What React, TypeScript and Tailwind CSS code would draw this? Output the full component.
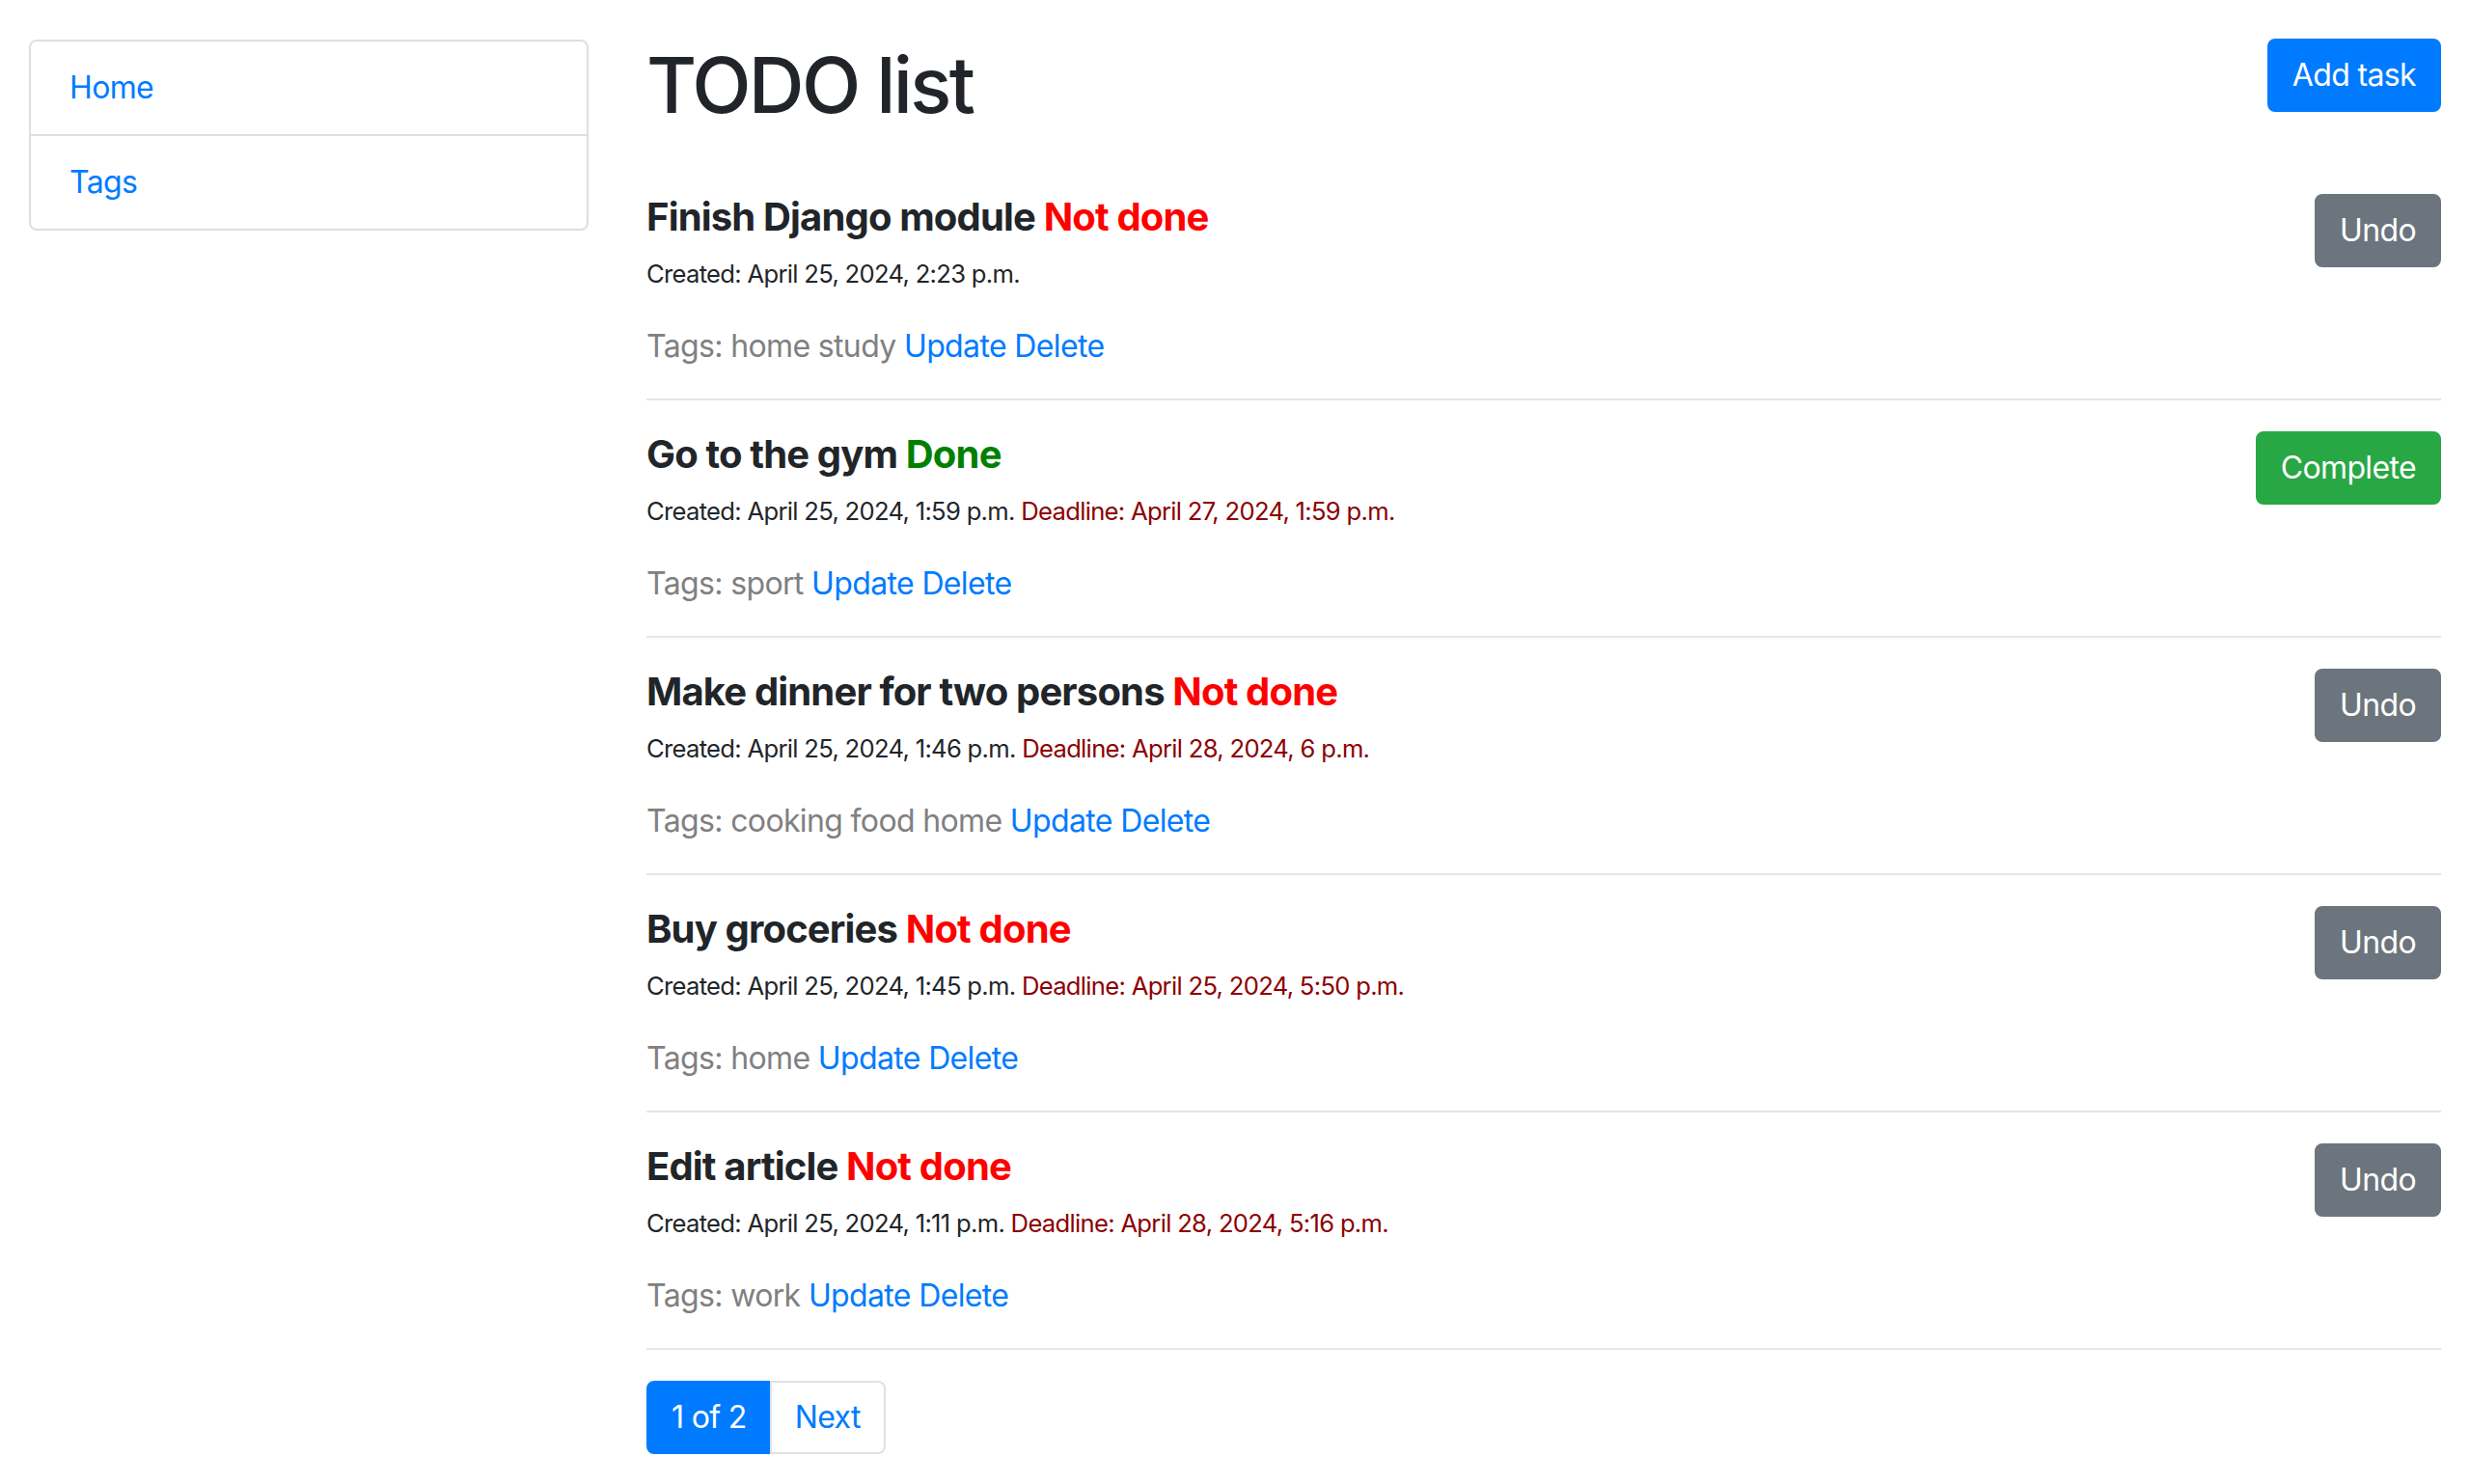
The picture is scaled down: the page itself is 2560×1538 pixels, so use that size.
type Task = {
  title: string;
  done: boolean;
  created: string;
  deadline?: string;
  tags: string;
};

const tasks: Task[] = [
  { title: "Finish Django module", done: false, created: "April 25, 2024, 2:23 p.m.", tags: "home study" },
  {
    title: "Go to the gym",
    done: true,
    created: "April 25, 2024, 1:59 p.m.",
    deadline: "April 27, 2024, 1:59 p.m.",
    tags: "sport",
  },
  {
    title: "Make dinner for two persons",
    done: false,
    created: "April 25, 2024, 1:46 p.m.",
    deadline: "April 28, 2024, 6 p.m.",
    tags: "cooking food home",
  },
  {
    title: "Buy groceries",
    done: false,
    created: "April 25, 2024, 1:45 p.m.",
    deadline: "April 25, 2024, 5:50 p.m.",
    tags: "home",
  },
  {
    title: "Edit article",
    done: false,
    created: "April 25, 2024, 1:11 p.m.",
    deadline: "April 28, 2024, 5:16 p.m.",
    tags: "work",
  },
];

function TaskRow({ task }: { task: Task }) {
  return (
    <div className="flex items-start justify-between border-b-2 border-[#e6e6e6] pt-[32px] pb-[30px] first:pt-0">
      <div>
        <h5 className="mb-[16px] text-[40px] leading-[48px] font-bold tracking-[-0.021em]">
          {task.title}{" "}
          {task.done ? <span className="text-[#008000]">Done</span> : <span className="text-[#ff0000]">Not done</span>}
        </h5>
        <p className="mb-[32px] text-[25.6px] leading-[38px] tracking-[-0.027em]">
          Created: {task.created}
          {task.deadline ? <span className="text-[#8b0000]"> Deadline: {task.deadline}</span> : null}
        </p>
        <p className="text-[32px] leading-[48px] tracking-[-0.02em] text-[#808080]">
          Tags: {task.tags}{" "}
          <a href="#" className="text-[#007bff]">
            Update
          </a>{" "}
          <a href="#" className="text-[#007bff]">
            Delete
          </a>
        </p>
      </div>
      {task.done ? (
        <button className="rounded-[8px] border-2 border-[#28a745] bg-[#28a745] px-[24px] py-[12px] text-[32px] leading-[48px] tracking-[-0.02em] text-white">
          Complete
        </button>
      ) : (
        <button className="rounded-[8px] border-2 border-[#6c757d] bg-[#6c757d] px-[24px] py-[12px] text-[32px] leading-[48px] tracking-[-0.02em] text-white">
          Undo
        </button>
      )}
    </div>
  );
}

export default function App() {
  return (
    <div className="flex min-h-screen bg-white pt-[40px] font-['Inter',sans-serif] text-[#212529]">
      <div className="w-[640px] shrink-0 px-[30px]">
        <div className="mt-[1px] flex flex-col rounded-[8px] border-2 border-[#dfdfdf]">
          <a href="#" className="px-[40px] py-[24px] text-[32px] leading-[48px] tracking-[-0.02em] text-[#007bff]">
            Home
          </a>
          <a
            href="#"
            className="border-t-2 border-[#dfdfdf] px-[40px] py-[24px] text-[32px] leading-[48px] tracking-[-0.02em] text-[#007bff]"
          >
            Tags
          </a>
        </div>
      </div>

      <div className="flex-1 px-[30px]">
        <div className="mb-[65px] flex items-start justify-between">
          <h1 className="text-[80px] leading-[96px] font-medium tracking-[-0.033em]">TODO list</h1>
          <button className="rounded-[8px] border-2 border-[#007bff] bg-[#007bff] px-[24px] py-[12px] text-[32px] leading-[48px] tracking-[-0.02em] text-white">
            Add task
          </button>
        </div>

        <div className="flex flex-col">
          {tasks.map((t) => (
            <TaskRow key={t.title} task={t} />
          ))}
        </div>

        <div className="mt-[32px] flex">
          <span className="rounded-l-[8px] border-2 border-[#007bff] bg-[#007bff] px-[24px] py-[16px] text-[32px] leading-[40px] tracking-[-0.02em] text-white">
            1 of 2
          </span>
          <a
            href="#"
            className="-ml-[2px] rounded-r-[8px] border-2 border-[#dee2e6] px-[24px] py-[16px] text-[32px] leading-[40px] tracking-[-0.02em] text-[#007bff]"
          >
            Next
          </a>
        </div>
      </div>
    </div>
  );
}
